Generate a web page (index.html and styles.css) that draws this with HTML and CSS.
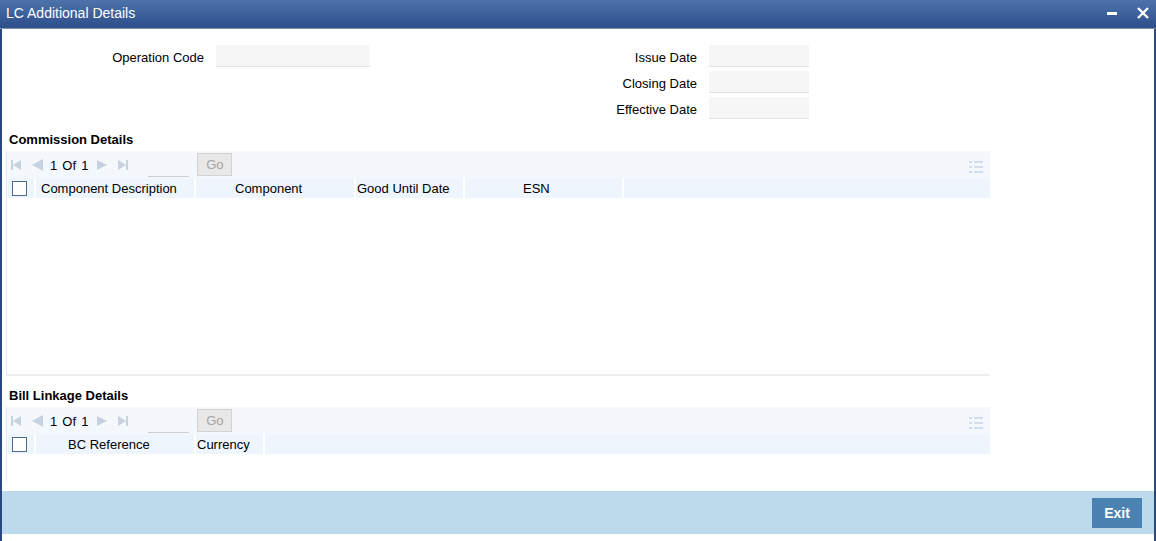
FILE: index.html
```html
<!doctype html>
<html lang="en">
<head>
  <meta charset="utf-8">
  <title>LC Additional Details</title>
  <link rel="stylesheet" href="styles.css">
</head>
<body>
<div class="window">
  <div class="titlebar">
    <span class="title">LC Additional Details</span>
    <span class="winbtns">
      <svg width="10" height="12" viewBox="0 0 10 12"><rect x="0" y="5" width="10" height="3" fill="#fff"/></svg>
      <svg width="12" height="12" viewBox="0 0 12 12"><path d="M1 1L11 11M11 1L1 11" stroke="#fff" stroke-width="2.4"/></svg>
    </span>
  </div>

  <div class="content">
    <div class="form">
      <label class="lbl">Operation Code</label>
      <div class="inp"></div>
      <label class="lbl">Issue Date</label>
      <div class="inp"></div>

      <span></span><span></span>
      <label class="lbl">Closing Date</label>
      <div class="inp"></div>

      <span></span><span></span>
      <label class="lbl">Effective Date</label>
      <div class="inp"></div>
    </div>

    <h3 class="sect">Commission Details</h3>
    <div class="panel panel-comm">
      <div class="toolbar">
        <span class="nav">
          <svg width="10" height="10" viewBox="0 0 10 10"><rect x="0" y="0" width="2" height="10"/><path d="M10 0L2 5L10 10Z"/></svg>
          <svg width="11" height="12" viewBox="0 0 11 12"><path d="M11 0L0 6L11 12Z"/></svg>
        </span>
        <span class="pages">1 Of 1</span>
        <span class="nav">
          <svg width="10" height="10" viewBox="0 0 10 10"><path d="M0 0L10 5L0 10Z"/></svg>
          <svg width="10" height="10" viewBox="0 0 10 10"><path d="M0 0L8 5L0 10Z"/><rect x="8" y="0" width="2" height="10"/></svg>
        </span>
        <span class="pageinp"></span>
        <button class="go">Go</button>
        <svg class="cols" width="14" height="12" viewBox="0 0 14 12"><rect x="0" y="0" width="3" height="2"/><rect x="5" y="0" width="9" height="2"/><rect x="0" y="5" width="3" height="2"/><rect x="5" y="5" width="9" height="2"/><rect x="0" y="10" width="3" height="2"/><rect x="5" y="10" width="9" height="2"/></svg>
      </div>
      <div class="thead">
        <div class="th th-chk"><span class="chk"></span></div>
        <div class="th c-desc">Component Description</div>
        <div class="th c-comp">Component</div>
        <div class="th c-date">Good Until Date</div>
        <div class="th c-esn">ESN</div>
        <div class="th th-rest"></div>
      </div>
    </div>

    <h3 class="sect">Bill Linkage Details</h3>
    <div class="panel panel-bill">
      <div class="toolbar">
        <span class="nav">
          <svg width="10" height="10" viewBox="0 0 10 10"><rect x="0" y="0" width="2" height="10"/><path d="M10 0L2 5L10 10Z"/></svg>
          <svg width="11" height="12" viewBox="0 0 11 12"><path d="M11 0L0 6L11 12Z"/></svg>
        </span>
        <span class="pages">1 Of 1</span>
        <span class="nav">
          <svg width="10" height="10" viewBox="0 0 10 10"><path d="M0 0L10 5L0 10Z"/></svg>
          <svg width="10" height="10" viewBox="0 0 10 10"><path d="M0 0L8 5L0 10Z"/><rect x="8" y="0" width="2" height="10"/></svg>
        </span>
        <span class="pageinp"></span>
        <button class="go">Go</button>
        <svg class="cols" width="14" height="12" viewBox="0 0 14 12"><rect x="0" y="0" width="3" height="2"/><rect x="5" y="0" width="9" height="2"/><rect x="0" y="5" width="3" height="2"/><rect x="5" y="5" width="9" height="2"/><rect x="0" y="10" width="3" height="2"/><rect x="5" y="10" width="9" height="2"/></svg>
      </div>
      <div class="thead">
        <div class="th th-chk"><span class="chk"></span></div>
        <div class="th c-bcref">BC Reference</div>
        <div class="th c-ccy">Currency</div>
        <div class="th th-rest"></div>
      </div>
    </div>
  </div>

  <div class="footer">
    <button class="exit">Exit</button>
  </div>
</div>
</body>
</html>
```

FILE: styles.css
```css
* { box-sizing: border-box; }
body { margin: 0; background: #fff; font-family: "Liberation Sans", Arial, sans-serif; font-size: 13px; color: #000; }

.window { width: 1156px; height: 541px; border-left: 2px solid #29497e; border-right: 2px solid #29497e; display: flex; flex-direction: column; padding-bottom: 7px; }

.titlebar { height: 29px; flex: none; background: linear-gradient(#4e73aa, #2c4e8b); border-bottom: 1px solid #7d93ad; display: flex; align-items: center; justify-content: space-between; padding: 0 7px 2px 4px; margin-left: -2px; margin-right: -2px; }
.title { color: #fff; font-size: 14px; padding-left: 2px; }
.winbtns { display: flex; align-items: center; gap: 20px; }

.content { flex: 1; }

.form { display: grid; grid-template-columns: 202px 154px 315px 100px; grid-auto-rows: 22px; column-gap: 12px; row-gap: 4px; margin-top: 16px; }
.lbl { text-align: right; line-height: 22px; padding-top: 2px; }
.inp { background: #f6f6f6; border-bottom: 1px solid #e2e2e2; }

.sect { margin: 12px 0 0 7px; font-size: 13px; font-weight: bold; line-height: 18px; height: 18px; }
.sect + .panel { margin-top: 2px; }
.panel-comm + .sect { margin-top: 11px; }

.panel { margin-left: 4px; width: 984px; border-left: 1px solid #e8ebef; }
.panel-comm { height: 225px; border-bottom: 2px solid #eeeeee; }
.panel-bill { height: 76px; }

.toolbar { height: 27px; background: #f4f8fd; display: flex; align-items: center; padding-left: 4px; position: relative; }
.nav { display: flex; align-items: center; gap: 11px; fill: #c7d2e0; }
.pages { margin: 0 9px 0 7px; word-spacing: 1.5px; padding-top: 1px; }
.pageinp { width: 41px; height: 24px; border-bottom: 1px solid #cfcfcf; margin-left: 20px; }
.go { margin-left: 8px; width: 35px; height: 23px; background: #e8e8e8; border: 1px solid #d2d2d2; color: #a3a3a3; font-family: inherit; font-size: 13px; padding: 0; }
.cols { position: absolute; right: 7px; top: 10px; fill: #d3dcea; }

.thead { height: 20px; display: flex; background: #eef5fd; }
.th { height: 20px; line-height: 22px; border-right: 2px solid #fff; white-space: nowrap; overflow: hidden; }
.th-chk { width: 29px; padding-left: 5px; display: flex; align-items: center; }
.th-rest { flex: 1; border-right: 0; }
.chk { width: 15px; height: 15px; border: 1px solid #4e6a88; background: #fff; }

.c-desc { width: 160px; padding-left: 5px; }
.c-comp { width: 160px; padding-left: 39px; }
.c-date { width: 109px; padding-left: 1px; }
.c-esn { width: 159px; padding-left: 58px; }
.c-bcref { width: 160px; padding-left: 32px; }
.c-ccy { width: 69px; padding-left: 1px; }

.footer { height: 43px; flex: none; background: #bdd9ec; display: flex; justify-content: flex-end; align-items: center; padding-right: 12px; }
.exit { width: 50px; height: 30px; background: #4a82b1; border: 0; color: #fff; font-family: inherit; font-weight: bold; font-size: 14px; padding: 0; }
```
